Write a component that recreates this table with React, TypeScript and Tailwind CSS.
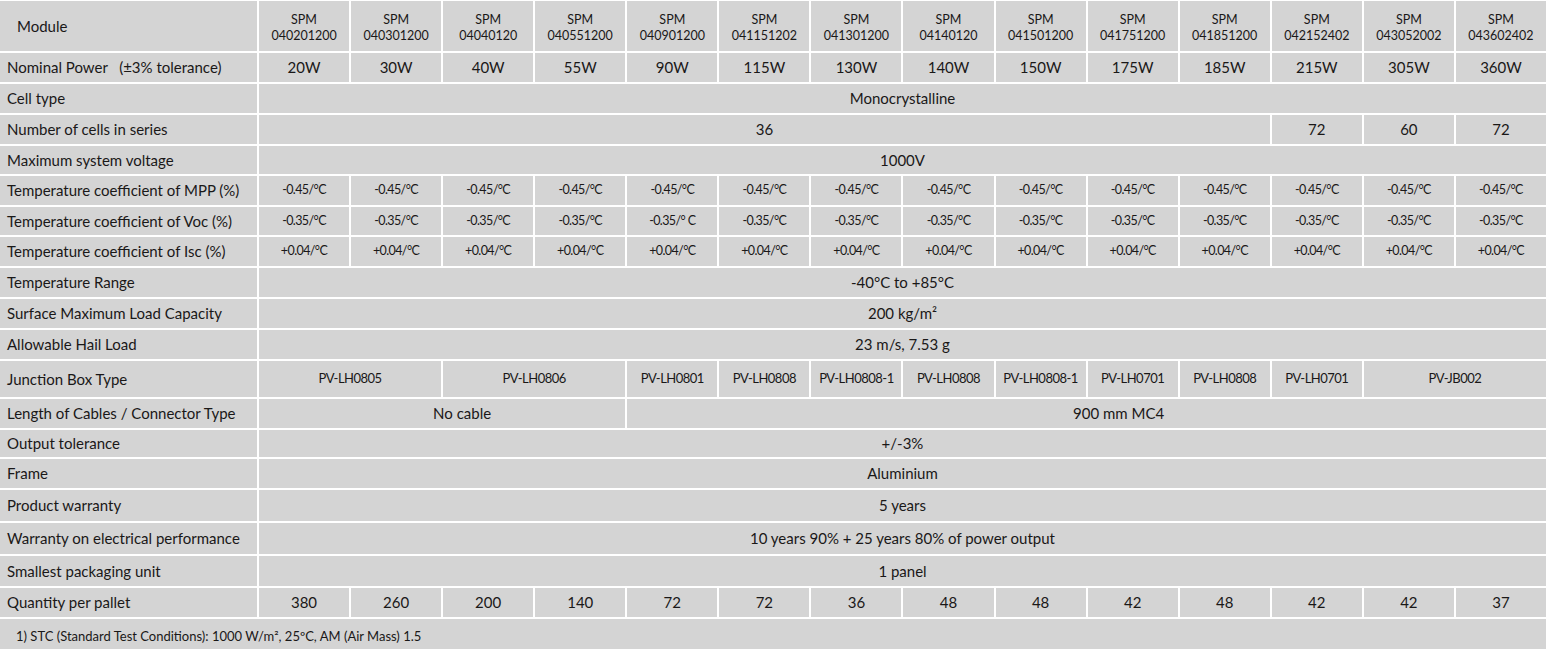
import type { ReactNode } from 'react';

const models = [
  '040201200', '040301200', '04040120', '040551200', '040901200', '041151202', '041301200',
  '04140120', '041501200', '041751200', '041851200', '042152402', '043052002', '043602402',
];
const powers = ['20W', '30W', '40W', '55W', '90W', '115W', '130W', '140W', '150W', '175W', '185W', '215W', '305W', '360W'];
const mpp = Array(14).fill('-0.45/°C');
const voc = ['-0.35/°C', '-0.35/°C', '-0.35/°C', '-0.35/°C', '-0.35/° C', '-0.35/°C', '-0.35/°C', '-0.35/°C', '-0.35/°C', '-0.35/°C', '-0.35/°C', '-0.35/°C', '-0.35/°C', '-0.35/°C'];
const isc = Array(14).fill('+0.04/°C');
const pallet = ['380', '260', '200', '140', '72', '72', '36', '48', '48', '42', '48', '42', '42', '37'];

function Label({ children, className = '' }: { children: ReactNode; className?: string }) {
  return <div className={`flex items-center bg-[#d4d4d4] pl-[7px] text-[15px] ${className}`}>{children}</div>;
}

function Cell({ children, className = '' }: { children?: ReactNode; className?: string }) {
  return <div className={`flex items-center justify-center bg-[#d4d4d4] ${className}`}>{children}</div>;
}

export default function App() {
  return (
    <div
      className="w-[1546px] h-[649px] bg-white pt-[1px] text-[#1a1818] overflow-hidden"
      style={{ fontFamily: 'Lato, "Open Sans", sans-serif' }}
    >
      <div className="grid grid-cols-[257px_repeat(14,minmax(0,1fr))] grid-rows-[50px_29px_29px_29px_28px_29px_28px_29px_29px_29px_29px_36px_29px_27px_29px_31px_31px_30px_29px] gap-[2px] bg-white">
        {/* Header */}
        <Label className="pl-[17px]">Module</Label>
        {models.map((m, i) => (
          <Cell key={i} className="flex-col pt-[3px] text-[12.5px] leading-[16px]">
            <span>SPM</span>
            <span>{m}</span>
          </Cell>
        ))}

        <Label>Nominal Power&nbsp;&nbsp;&nbsp;(±3% tolerance)</Label>
        {powers.map((p, i) => (
          <Cell key={i} className="text-[15px]">{p}</Cell>
        ))}

        <Label>Cell type</Label>
        <Cell className="col-span-14 text-[15px]">Monocrystalline</Cell>

        <Label>Number of cells in series</Label>
        <Cell className="col-span-11 text-[15px]">36</Cell>
        <Cell className="text-[15px]">72</Cell>
        <Cell className="text-[15px]">60</Cell>
        <Cell className="text-[15px]">72</Cell>

        <Label>Maximum system voltage</Label>
        <Cell className="col-span-14 text-[15px]">1000V</Cell>

        <Label>Temperature coefficient of MPP (%)</Label>
        {mpp.map((v, i) => (
          <Cell key={i} className="text-[12.5px] tracking-[-0.6px]">{v}</Cell>
        ))}

        <Label>Temperature coefficient of Voc (%)</Label>
        {voc.map((v, i) => (
          <Cell key={i} className="text-[12.5px] tracking-[-0.6px] whitespace-pre">{v}</Cell>
        ))}

        <Label>Temperature coefficient of Isc (%)</Label>
        {isc.map((v, i) => (
          <Cell key={i} className="text-[12.5px] tracking-[-0.6px]">{v}</Cell>
        ))}

        <Label>Temperature Range</Label>
        <Cell className="col-span-14 text-[15px]">-40°C to +85°C</Cell>

        <Label>Surface Maximum Load Capacity</Label>
        <Cell className="col-span-14 text-[15px]">200 kg/m²</Cell>

        <Label>Allowable Hail Load</Label>
        <Cell className="col-span-14 text-[15px]">23 m/s, 7.53 g</Cell>

        <Label>Junction Box Type</Label>
        <Cell className="col-span-2 text-[13px] tracking-[-0.5px]">PV-LH0805</Cell>
        <Cell className="col-span-2 text-[13px] tracking-[-0.5px]">PV-LH0806</Cell>
        <Cell className="text-[13px] tracking-[-0.5px]">PV-LH0801</Cell>
        <Cell className="text-[13px] tracking-[-0.5px]">PV-LH0808</Cell>
        <Cell className="text-[13px] tracking-[-0.5px]">PV-LH0808-1</Cell>
        <Cell className="text-[13px] tracking-[-0.5px]">PV-LH0808</Cell>
        <Cell className="text-[13px] tracking-[-0.5px]">PV-LH0808-1</Cell>
        <Cell className="text-[13px] tracking-[-0.5px]">PV-LH0701</Cell>
        <Cell className="text-[13px] tracking-[-0.5px]">PV-LH0808</Cell>
        <Cell className="text-[13px] tracking-[-0.5px]">PV-LH0701</Cell>
        <Cell className="col-span-2 text-[13px] tracking-[-0.5px]">PV-JB002</Cell>

        <Label>Length of Cables / Connector Type</Label>
        <Cell className="col-span-4 pl-[40px] text-[15px]">No cable</Cell>
        <Cell className="col-span-10 pl-[64px] text-[15px]">900 mm MC4</Cell>

        <Label>Output tolerance</Label>
        <Cell className="col-span-14 text-[15px]">+/-3%</Cell>

        <Label>Frame</Label>
        <Cell className="col-span-14 text-[15px]">Aluminium</Cell>

        <Label>Product warranty</Label>
        <Cell className="col-span-14 text-[15px]">5 years</Cell>

        <Label>Warranty on electrical performance</Label>
        <Cell className="col-span-14 text-[15px]">10 years 90% + 25 years 80% of power output</Cell>

        <Label>Smallest packaging unit</Label>
        <Cell className="col-span-14 text-[15px]">1 panel</Cell>

        <Label>Quantity per pallet</Label>
        {pallet.map((q, i) => (
          <Cell key={i} className="text-[15px]">{q}</Cell>
        ))}
      </div>

      {/* Footnote */}
      <div className="mt-[2px] flex h-[30px] items-center bg-[#d4d4d4] pl-[16px] pt-[5px] text-[13px]">
        1) STC (Standard Test Conditions): 1000 W/m², 25ºC, AM (Air Mass) 1.5
      </div>
    </div>
  );
}
